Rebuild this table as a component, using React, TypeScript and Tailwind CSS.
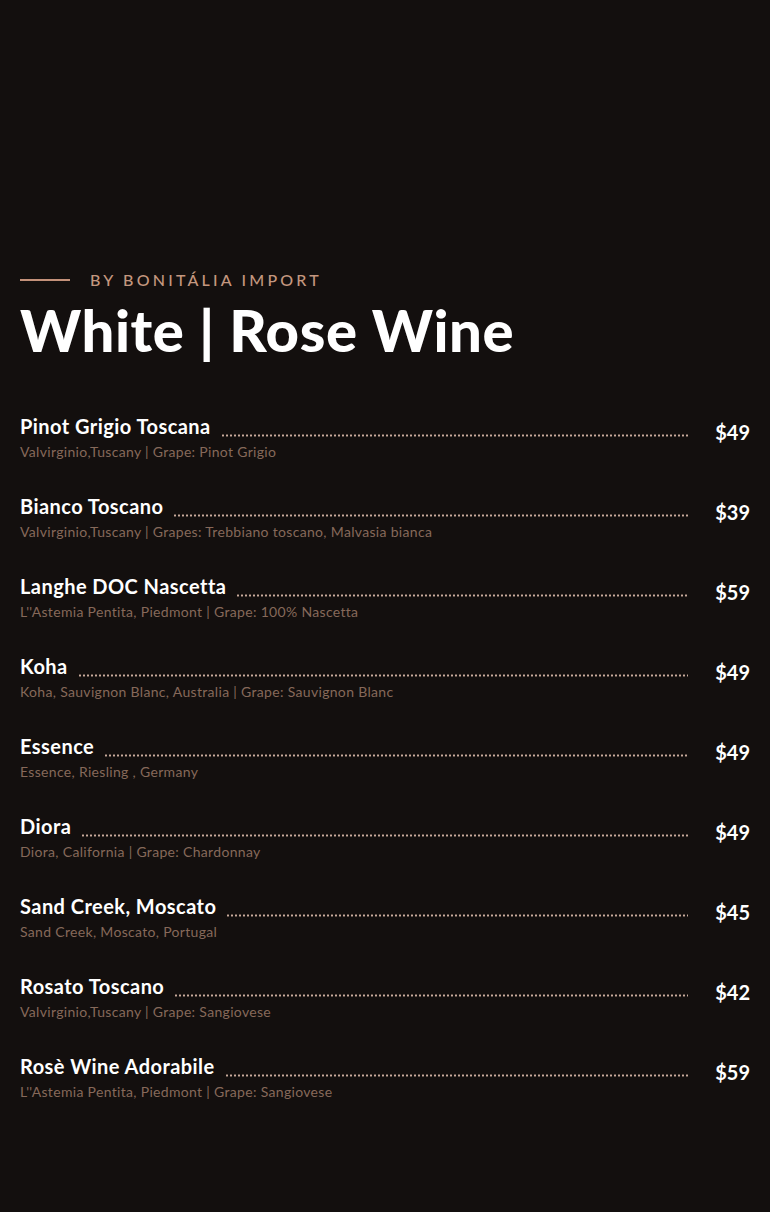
const wines = [
  { name: 'Pinot Grigio Toscana', desc: 'Valvirginio,Tuscany | Grape: Pinot Grigio', price: '$49' },
  { name: 'Bianco Toscano', desc: 'Valvirginio,Tuscany | Grapes: Trebbiano toscano, Malvasia bianca', price: '$39' },
  { name: 'Langhe DOC Nascetta', desc: "L''Astemia Pentita, Piedmont | Grape: 100% Nascetta", price: '$59' },
  { name: 'Koha', desc: 'Koha, Sauvignon Blanc, Australia | Grape: Sauvignon Blanc', price: '$49' },
  { name: 'Essence', desc: 'Essence, Riesling , Germany', price: '$49' },
  { name: 'Diora', desc: 'Diora, California | Grape: Chardonnay', price: '$49' },
  { name: 'Sand Creek, Moscato', desc: 'Sand Creek, Moscato, Portugal', price: '$45' },
  { name: 'Rosato Toscano', desc: 'Valvirginio,Tuscany | Grape: Sangiovese', price: '$42' },
  { name: 'Rosè Wine Adorabile', desc: "L''Astemia Pentita, Piedmont | Grape: Sangiovese", price: '$59' },
]

export default function App() {
  return (
    <div className="min-h-[1212px] w-[770px] bg-[#130f0e] px-5 pt-[270px] pb-10" style={{ fontFamily: 'Lato, "Open Sans", sans-serif' }}>
      {/* heading */}
      <div className="flex items-center gap-5 h-5">
        <span className="block w-[50px] h-[2px] bg-[#c4917a]" />
        <span className="text-[16px] tracking-[3.2px] text-[#c4977f] font-medium">BY BONITÁLIA IMPORT</span>
      </div>
      <h1 className="mt-[10px] text-[58px] leading-[60px] font-black text-white tracking-[0.6px]">White | Rose Wine</h1>

      {/* list */}
      <div className="mt-[53px] flex flex-col">
        {wines.map(w => (
          <div key={w.name} className="h-20">
            <div className="flex items-end">
              <span className="text-[20px] leading-[26px] font-bold text-white whitespace-nowrap tracking-[0.45px]">{w.name}</span>
              <span className="flex-1 ml-[10px] mr-[26px] mb-[2px] h-[3px] bg-[radial-gradient(circle,#c9aa9b_0.9px,transparent_1.3px)] bg-[length:4px_3px] bg-repeat-x" />
              <span className="w-9 text-right text-[20px] leading-[26px] font-bold text-white mb-[-6px]">{w.price}</span>
            </div>
            <div className="mt-[5px] text-[14px] leading-[16px] text-[#86695a] tracking-[0.32px]">{w.desc}</div>
          </div>
        ))}
      </div>
    </div>
  )
}
